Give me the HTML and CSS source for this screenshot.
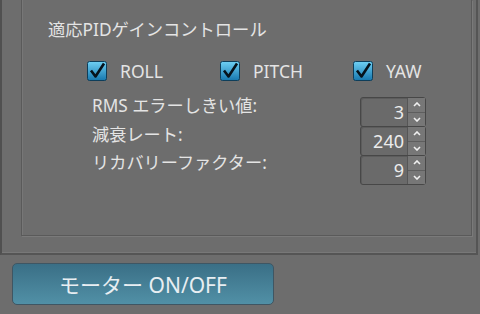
FILE: index.html
```html
<!DOCTYPE html>
<html lang="ja">
<head>
<meta charset="utf-8">
<link rel="stylesheet" href="styles.css">
</head>
<body>
<div class="outer">
  <div class="group">
    <div class="title">適応PIDゲインコントロール</div>
    <div class="checks">
      <label class="check"><svg class="box" viewBox="0 0 20 20" width="20" height="20"><defs><linearGradient id="g" x1="0" y1="0" x2="0" y2="1"><stop offset="0" stop-color="#6fd0f4"/><stop offset="1" stop-color="#1677ae"/></linearGradient></defs><rect x="0.5" y="0.5" width="19" height="19" rx="2" fill="url(#g)" stroke="#0e3e5a"/><path d="M4 9.5 L8.5 15.5 L17 2.5" fill="none" stroke="#06121b" stroke-width="2.6" stroke-linejoin="round"/></svg><span>ROLL</span></label>
      <label class="check"><svg class="box" viewBox="0 0 20 20" width="20" height="20"><rect x="0.5" y="0.5" width="19" height="19" rx="2" fill="url(#g)" stroke="#0e3e5a"/><path d="M4 9.5 L8.5 15.5 L17 2.5" fill="none" stroke="#06121b" stroke-width="2.6" stroke-linejoin="round"/></svg><span>PITCH</span></label>
      <label class="check"><svg class="box" viewBox="0 0 20 20" width="20" height="20"><rect x="0.5" y="0.5" width="19" height="19" rx="2" fill="url(#g)" stroke="#0e3e5a"/><path d="M4 9.5 L8.5 15.5 L17 2.5" fill="none" stroke="#06121b" stroke-width="2.6" stroke-linejoin="round"/></svg><span>YAW</span></label>
    </div>
    <div class="params">
      <div class="labels">
        <div class="lbl">RMS エラーしきい値:</div>
        <div class="lbl">減衰レート:</div>
        <div class="lbl">リカバリーファクター:</div>
      </div>
      <div class="spins">
        <div class="spin"><div class="val">3</div><div class="arrows"><div class="arr"><svg viewBox="0 0 8 5" width="8" height="5"><path d="M1 4 L4 1 L7 4" fill="none" stroke="#f0f0f0" stroke-width="1.6"/></svg></div><div class="arr"><svg viewBox="0 0 8 5" width="8" height="5"><path d="M1 1 L4 4 L7 1" fill="none" stroke="#f0f0f0" stroke-width="1.6"/></svg></div></div></div>
        <div class="spin"><div class="val">240</div><div class="arrows"><div class="arr"><svg viewBox="0 0 8 5" width="8" height="5"><path d="M1 4 L4 1 L7 4" fill="none" stroke="#f0f0f0" stroke-width="1.6"/></svg></div><div class="arr"><svg viewBox="0 0 8 5" width="8" height="5"><path d="M1 1 L4 4 L7 1" fill="none" stroke="#f0f0f0" stroke-width="1.6"/></svg></div></div></div>
        <div class="spin"><div class="val">9</div><div class="arrows"><div class="arr"><svg viewBox="0 0 8 5" width="8" height="5"><path d="M1 4 L4 1 L7 4" fill="none" stroke="#f0f0f0" stroke-width="1.6"/></svg></div><div class="arr"><svg viewBox="0 0 8 5" width="8" height="5"><path d="M1 1 L4 4 L7 1" fill="none" stroke="#f0f0f0" stroke-width="1.6"/></svg></div></div></div>
      </div>
    </div>
  </div>
</div>
<button class="motor">モーター ON/OFF</button>
</body>
</html>
```
FILE: styles.css
```css
html, body {
  margin: 0;
  padding: 0;
}
body {
  width: 480px;
  height: 314px;
  overflow: hidden;
  background: #6d6d6d;
  color: #e4e4e4;
  font-family: "Noto Sans", "Noto Sans CJK JP", sans-serif;
}
.outer {
  box-sizing: border-box;
  width: 478px;
  height: 255px;
  border-left: 2px solid #505050;
  border-right: 2px solid #555555;
  border-bottom: 2px solid #555555;
  box-shadow: inset 0 -1px 0 #787878;
  padding: 0 4px 0 19px;
}
.group {
  box-sizing: border-box;
  height: 236px;
  border-left: 1px solid #5a5a5a;
  border-right: 1px solid #5a5a5a;
  border-bottom: 1px solid #5a5a5a;
  box-shadow: 1px 1px 0 #7a7a7a, inset 1px 0 0 #777777;
  padding: 20px 0 0 26px;
}
.title {
  font-size: 17.3px;
  line-height: 20px;
  height: 20px;
  white-space: nowrap;
}
.checks {
  display: flex;
  margin: 20px 0 0 39px;
  height: 21px;
}
.check {
  display: flex;
  flex: none;
  align-items: center;
  width: 133px;
  font-size: 17.5px;
}
.box {
  display: block;
  margin-right: 13px;
  flex: none;
}
.params {
  display: flex;
  margin: 11px 0 0 44px;
}
.labels {
  width: 268px;
}
.lbl {
  font-size: 17.2px;
  line-height: 28px;
  height: 28px;
  white-space: nowrap;
}
.lbl + .lbl {
  margin-top: 0.5px;
}
.spins {
  margin-top: 5px;
  width: 66px;
}
.spin {
  box-sizing: border-box;
  display: flex;
  height: 30px;
  border: 1px solid #474747;
  border-radius: 3px;
  background: #6a6a6a;
  box-shadow: inset 1px 1px 0 #5c5c5c;
}
.spin + .spin {
  margin-top: -1px;
}
.val {
  flex: 1;
  text-align: right;
  font-size: 18px;
  line-height: 28px;
  padding-right: 3px;
  color: #ececec;
}
.arrows {
  width: 17px;
  display: flex;
  flex-direction: column;
  border-left: 1px solid #565656;
}
.arr {
  flex: 1;
  display: flex;
  align-items: center;
  justify-content: center;
  background: #777777;
}
.arr + .arr {
  border-top: 1px solid #5e5e5e;
}
.arr svg {
  display: block;
}
.motor {
  display: block;
  box-sizing: border-box;
  margin: 8px 0 0 12px;
  width: 262px;
  height: 42px;
  border: 1px solid #3f5663;
  border-radius: 5px;
  background: linear-gradient(#3a6f86, #5190a6);
  color: #e8eef2;
  font-family: "Noto Sans", "Noto Sans CJK JP", sans-serif;
  font-size: 21px;
  padding: 0;
}
```
